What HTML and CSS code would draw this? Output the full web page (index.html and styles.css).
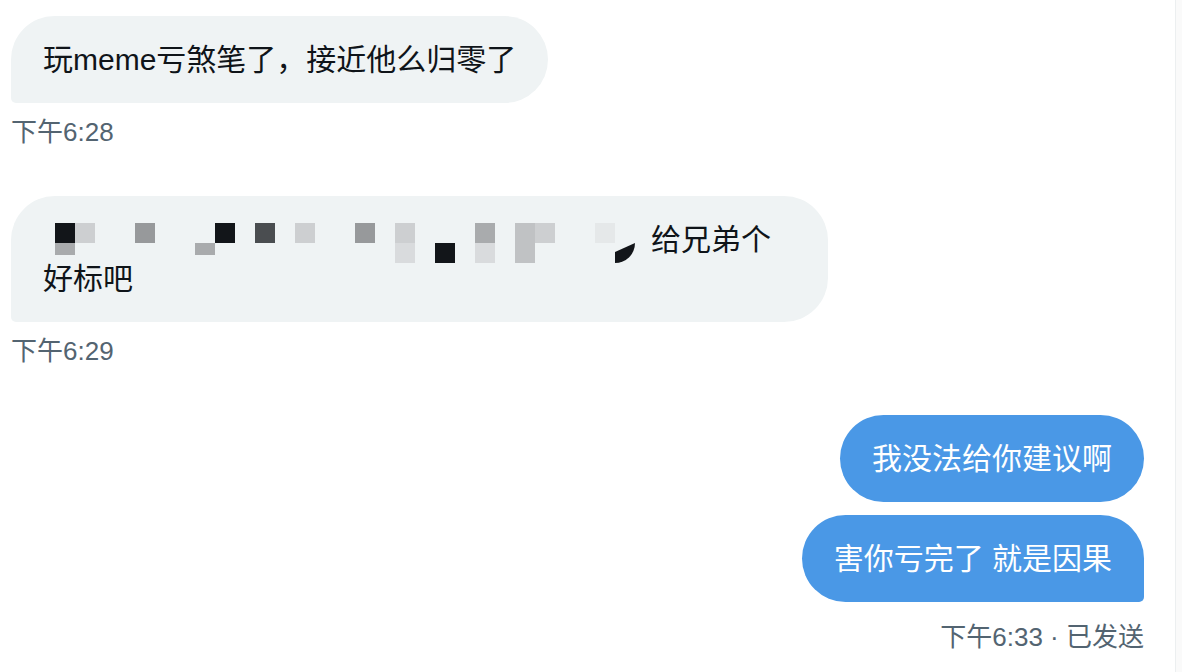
FILE: index.html
```html
<!DOCTYPE html>
<html lang="zh-CN">
<head>
    <meta charset="UTF-8" />
    <meta name="viewport" content="width=device-width, initial-scale=1.0" />
    <title>私信</title>
    <link rel="stylesheet" href="styles.css">
</head>
<body>
    <main class="thread">
        <div class="msg msg-in">
            <div class="bubble">玩meme亏煞笔了，接近他么归零了</div>
            <div class="meta">下午6:28</div>
        </div>

        <div class="msg msg-in">
            <div class="bubble"><span class="mosaic" aria-hidden="true"><span class="cell c-black" style="grid-area: 1 / 1"></span><span class="cell c-l2" style="grid-area: 1 / 2"></span><span class="cell c-m1 short" style="grid-area: 2 / 1"></span><span class="cell c-m2" style="grid-area: 1 / 5"></span><span class="cell c-m1 short" style="grid-area: 2 / 8"></span><span class="cell c-black" style="grid-area: 1 / 9"></span><span class="cell c-dark" style="grid-area: 1 / 11"></span><span class="cell c-l2" style="grid-area: 1 / 13"></span><span class="cell c-m2" style="grid-area: 1 / 16"></span><span class="cell c-l2" style="grid-area: 1 / 18"></span><span class="cell c-l3" style="grid-area: 2 / 18"></span><span class="cell c-black" style="grid-area: 2 / 20"></span><span class="cell c-m1" style="grid-area: 1 / 22"></span><span class="cell c-l3" style="grid-area: 2 / 22"></span><span class="cell c-l1" style="grid-area: 1 / 24"></span><span class="cell c-l2" style="grid-area: 1 / 25"></span><span class="cell c-l1" style="grid-area: 2 / 24"></span><span class="cell c-l4" style="grid-area: 1 / 28"></span><span class="cell c-black curl" style="grid-area: 2 / 29"></span></span>给兄弟个好标吧</div>
            <div class="meta">下午6:29</div>
        </div>

        <div class="msg msg-out">
            <div class="bubble">我没法给你建议啊</div>
            <div class="bubble last">害你亏完了 就是因果</div>
            <div class="meta">下午6:33 · 已发送</div>
        </div>
    </main>
</body>
</html>
```

FILE: styles.css
```css
body {
    margin: 0;
    background-color: #fafafa;
    font-family: "Liberation Sans", "Noto Sans CJK SC", sans-serif;
    color: #0f1419;
}
.thread {
    width: 1176px;
    height: 100vh;
    box-sizing: border-box;
    padding: 16px 31px 0 11px;
    background: #ffffff;
    border-right: 1px solid #eceff0;
    overflow: hidden;
}
.msg {
    display: flex;
    flex-direction: column;
    margin-bottom: 49px;
}
.msg-in {
    align-items: flex-start;
}
.msg-out {
    align-items: flex-end;
}
.bubble {
    max-width: 817px;
    box-sizing: border-box;
    padding: 24px 32px;
    font-size: 30px;
    line-height: 39px;
    border-radius: 44px;
}
.msg-in .bubble {
    background: #eff3f4;
    border-bottom-left-radius: 5px;
}
.msg-out .bubble {
    background: #4a98e6;
    color: #ffffff;
}
.msg-out .bubble + .bubble {
    margin-top: 13px;
}
.msg-out .bubble.last {
    border-bottom-right-radius: 5px;
}
.meta {
    margin-top: 14px;
    font-size: 26px;
    line-height: 30px;
    color: #536471;
}
.msg-out .meta {
    margin-top: 20px;
}

/* pixelated part of the second message */
.mosaic {
    display: inline-grid;
    vertical-align: top;
    width: 608px;
    height: 39px;
    box-sizing: border-box;
    padding: 3px 0 0 12px;
    grid-template-columns: repeat(29, 20px);
    grid-template-rows: 20px 20px;
}
.cell {
    display: block;
}
.cell.short {
    height: 12px;
}
.cell.curl {
    border-bottom-right-radius: 100%;
    clip-path: polygon(0 45%, 100% 0, 100% 100%, 0 100%);
}
.c-black { background: #121519; }
.c-dark { background: #4a4d50; }
.c-m2 { background: #97999b; }
.c-m1 { background: #a9abad; }
.c-l1 { background: #c0c2c4; }
.c-l2 { background: #cdcfd1; }
.c-l3 { background: #d9dbdd; }
.c-l4 { background: #e5e8e9; }
```
